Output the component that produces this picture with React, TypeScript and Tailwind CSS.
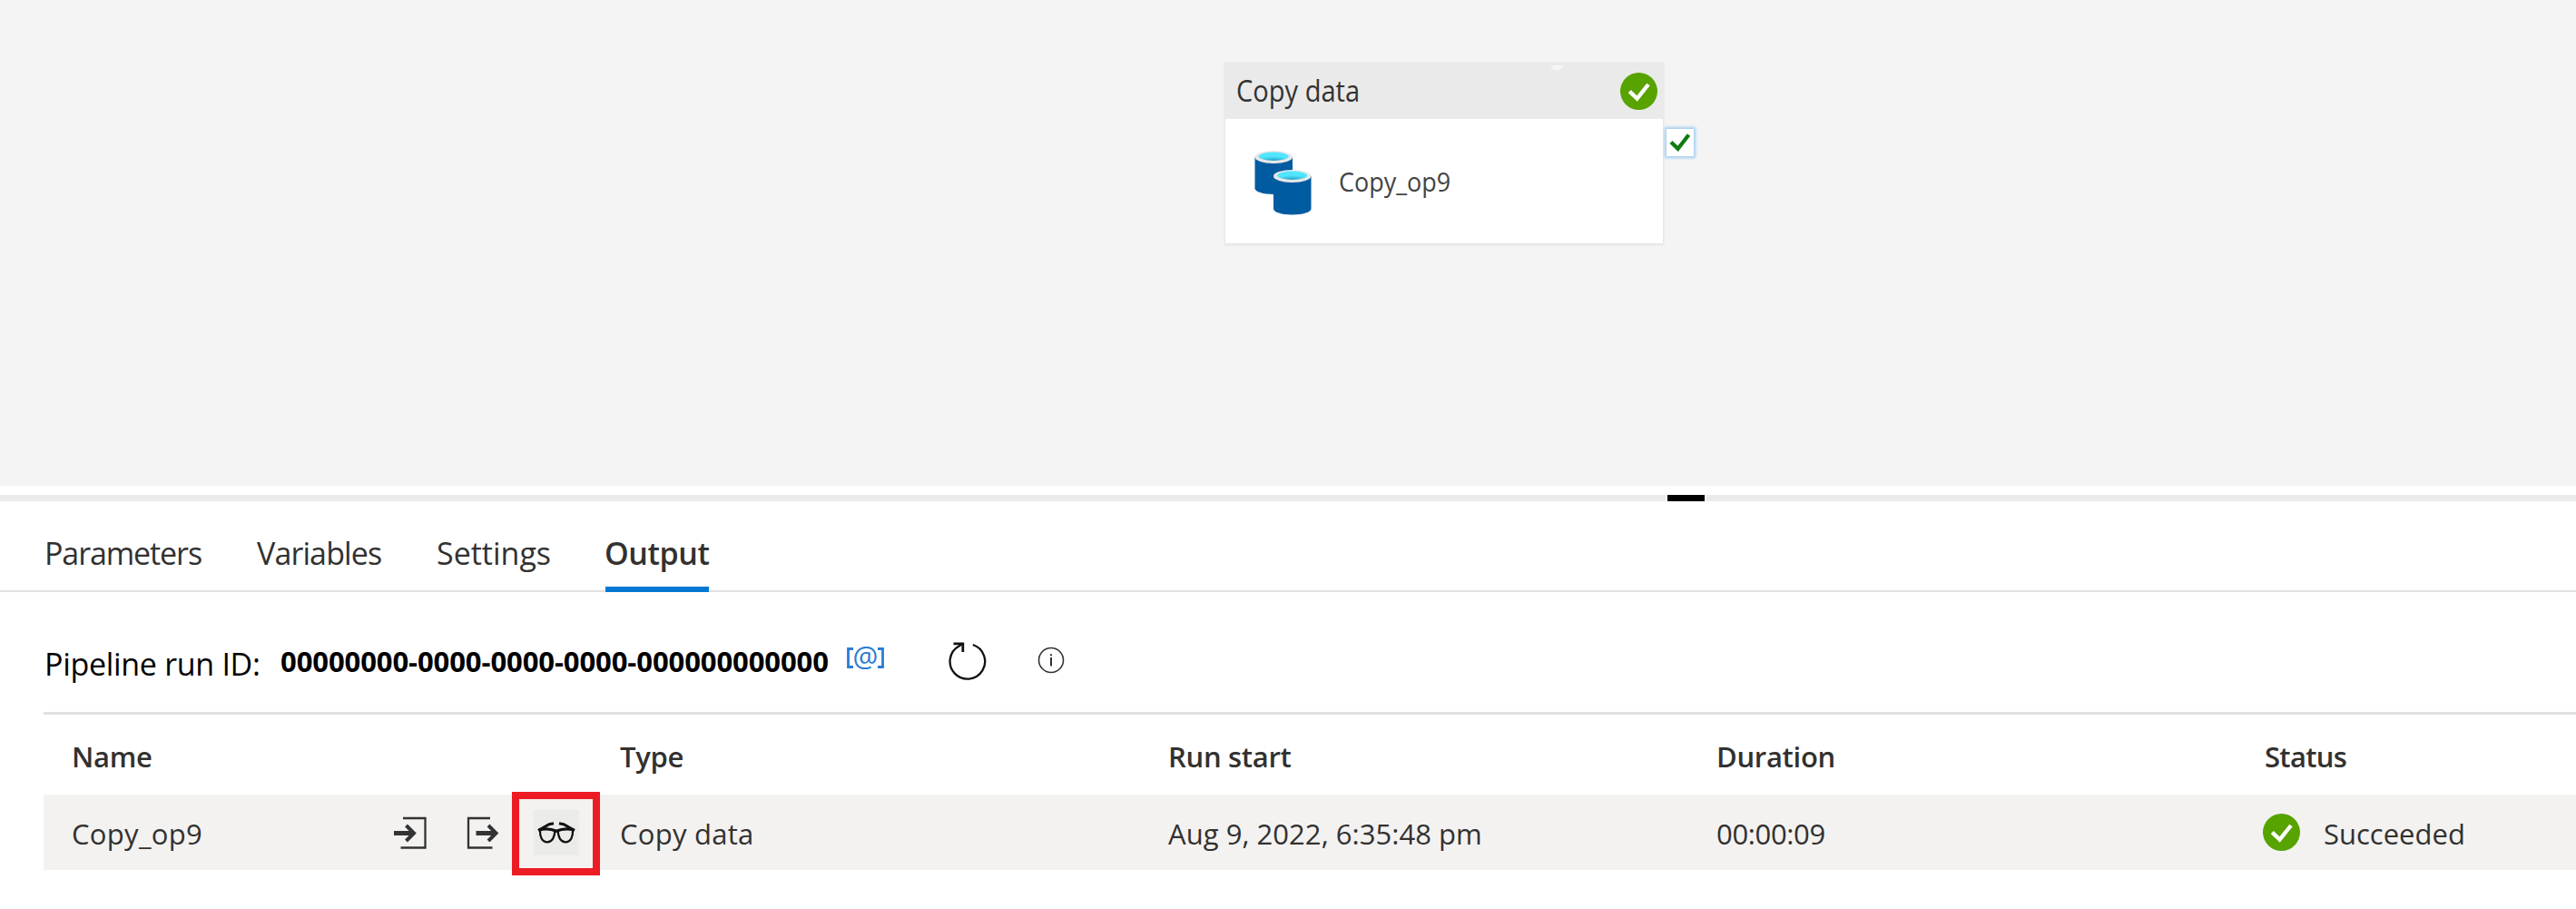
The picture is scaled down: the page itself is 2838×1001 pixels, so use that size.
import type { ReactNode } from "react";

function SuccessIcon({ className }: { className: string }) {
  return (
    <svg viewBox="0 0 41 41" className={className} fill="none">
      <circle cx="20.5" cy="20.5" r="20.5" fill="#57a300" />
      <path d="M10.3 20.6 18.6 28.6 31 13" stroke="#fff" strokeWidth="4.4" />
    </svg>
  );
}

function CopyDataIcon() {
  return (
    <svg viewBox="0 0 64 72" className="mt-[5px] h-[72px] w-16 shrink-0">
      <defs>
        <radialGradient id="well" cx="0.5" cy="1" r="0.6" gradientTransform="translate(0 0.1)">
          <stop offset="0" stopColor="#1f8fb8" />
          <stop offset="1" stopColor="#50e6ff" />
        </radialGradient>
      </defs>
      <path d="M0.5 7v34.5c0 3.600 9.300 6.500 20.700 6.500S42 45 42 41.500V7z" fill="#005ba1" />
      <ellipse cx="21.200" cy="7" rx="20.700" ry="7" fill="#e8e8e8" />
      <ellipse cx="21.200" cy="6.200" rx="16.500" ry="4.700" fill="url(#well)" />
      <path d="M21 28v36c0 3.600 9.300 6.500 20.700 6.500S62.500 67.600 62.500 64V28z" fill="#005ba1" />
      <ellipse cx="41.700" cy="28" rx="20.700" ry="7" fill="#e8e8e8" />
      <ellipse cx="41.700" cy="27.200" rx="16.500" ry="4.700" fill="url(#well)" />
    </svg>
  );
}

function InputIcon() {
  return (
    <svg viewBox="0 0 36 36" className="h-9 w-9 shrink-0" fill="none" stroke="#333">
      <path d="M10 2H34.500V34.500H7.500" strokeWidth="2.300" />
      <path d="M0 18.500H22" strokeWidth="5" />
      <path d="M13.500 10 22 18.500 13.500 27" strokeWidth="4" />
    </svg>
  );
}

function OutputIcon() {
  return (
    <svg viewBox="0 0 36 36" className="h-9 w-9 shrink-0" fill="none" stroke="#333">
      <path d="M26 2H2V34.500H28.500" strokeWidth="2.300" />
      <path d="M10.500 18.500H32.500" strokeWidth="5" />
      <path d="M24 10 32.500 18.500 24 27" strokeWidth="4" />
    </svg>
  );
}

function GlassesIcon() {
  return (
    <svg viewBox="0 0 42 24" className="h-6 w-[42px]" fill="none" stroke="#111" strokeWidth="2.300">
      <path d="M3 8.500C2.500 16 5 22.300 11 22.300S19 16 19.500 9" />
      <path d="M22.500 9C23 16 25 22.300 31 22.300S39.500 16 39 8.500" />
      <path d="M1 9.500 13 2.700 18 1.800M41 9.500 29 2.700 24 1.800" strokeWidth="3" />
      <path d="M1.500 9C7 7.500 15 7.500 21 10.300 27 7.500 35 7.500 40.500 9" strokeWidth="3.200" />
    </svg>
  );
}

function RefreshIcon() {
  return (
    <svg viewBox="0 0 42 42" className="h-[42px] w-[42px] shrink-0" fill="none" stroke="#111" strokeWidth="2.300">
      <path d="M26.800 3A19.300 19.300 0 1 1 11.500 4.500L15.500 1.800" />
      <path d="M5.500 1.800H15.800V11" strokeWidth="2.800" />
    </svg>
  );
}

function InfoIcon() {
  return (
    <svg viewBox="0 0 30 30" className="h-[30px] w-[30px] shrink-0" fill="none" stroke="#333">
      <circle cx="15" cy="15" r="13.500" strokeWidth="1.600" />
      <path d="M15 12V21.500M15 8.300V10.300" strokeWidth="2" />
    </svg>
  );
}

function Cell({ children }: { children: ReactNode }) {
  return <div className="flex w-[604px] shrink-0 items-center whitespace-nowrap">{children}</div>;
}

function ActivityCard() {
  return (
    <div className="relative ml-[1350px] mt-[69px] h-[199px] w-[482px] bg-white shadow-[0_1px_2px_1px_#e4e4e4]">
      <div className="flex h-[62px] items-center justify-between bg-[#eaeaea] pl-3 pr-[6px]">
        <span className="origin-left scale-x-[0.908] text-[32px] leading-none text-[#333]">Copy data</span>
        <SuccessIcon className="h-[41px] w-[41px]" />
      </div>
      <div className="flex h-[137px] items-center pl-8">
        <CopyDataIcon />
        <span className="ml-[29px] origin-left scale-x-[0.898] text-[30px] leading-none text-[#444]">Copy_op9</span>
      </div>
      <svg viewBox="0 0 14 5" className="absolute left-[358px] top-[3px] h-[5px] w-[14px]">
        <path d="M0 0H14L10 5H4Z" fill="#f6f6f6" />
      </svg>
      <div className="absolute left-[485.5px] top-[72.500px] flex h-[30px] w-[30px] items-center justify-center bg-white shadow-[0_0_3px_2px_#a3cdf0]">
        <svg viewBox="0 0 24 22" className="h-[22px] w-6" fill="none">
          <path d="M2 10.500 9.600 17.800 21.500 2.500" stroke="#107c10" strokeWidth="4.300" />
        </svg>
      </div>
    </div>
  );
}

function Tab({ children }: { children: ReactNode }) {
  return <span className="flex h-full items-center">{children}</span>;
}

export default function App() {
  return (
    <div className="flex h-[1001px] w-[2838px] flex-col overflow-hidden bg-white font-['Open_Sans','Noto_Sans',sans-serif] text-[31px] text-[#323130]">
      <div className="flex h-[535px] shrink-0 items-start bg-[#f4f4f4]">
        <ActivityCard />
      </div>

      <div className="mt-[10px] flex h-[7px] shrink-0 bg-[#ebebeb] pl-[1835px]">
        <div className="h-[7px] w-[45px] border-x-2 border-white bg-black" />
      </div>

      <div className="flex h-[100px] shrink-0 border-b-2 border-[#e1e1e1] pl-[49px] pt-4 text-[34px]">
        <div className="w-[234px] tracking-[-1.1px]"><Tab>Parameters</Tab></div>
        <div className="w-[198px] tracking-[-0.88px]"><Tab>Variables</Tab></div>
        <div className="w-[185px]"><Tab>Settings</Tab></div>
        <div className="relative w-[116px] font-semibold tracking-[-0.4px]">
          <Tab>Output</Tab>
          <div className="absolute -bottom-0.5 left-px h-[6px] w-[114px] bg-[#0078d4]" />
        </div>
      </div>

      <div className="flex h-[132px] shrink-0 items-center pl-[49px] pt-[26px] text-black">
        <span className="w-[260px] text-[34px] tracking-[-0.3px]">Pipeline run ID:</span>
        <span className="w-[623px] pb-[6px] font-bold tracking-[-0.09px]">
          00000000-0000-0000-0000-000000000000
        </span>
        <span className="flex w-[113px] items-center pb-[18px] text-[#2b7cd3]">
          <svg viewBox="0 0 8 23" className="mt-1 h-[23px] w-2 shrink-0" fill="none" stroke="currentColor" strokeWidth="2.800">
            <path d="M8 1.500H2.500V21.500H8" />
          </svg>
          <span className="flex w-[27px] shrink-0 justify-center text-[31px] font-medium leading-none">@</span>
          <svg viewBox="0 0 8 23" className="mt-1 h-[23px] w-2 shrink-0" fill="none" stroke="currentColor" strokeWidth="2.800">
            <path d="M0 1.500H5.500V21.500H0" />
          </svg>
        </span>
        <span className="w-[98px] pb-[6px]"><RefreshIcon /></span>
        <span className="pb-[9px]"><InfoIcon /></span>
      </div>

      <div className="ml-12 w-[2790px] shrink-0 border-t-[3px] border-[#e1e1e1]">
        <div className="flex h-[88px] items-center pl-[31px] pt-1 font-semibold tracking-[-0.3px]">
          <Cell>Name</Cell>
          <Cell>Type</Cell>
          <Cell>Run start</Cell>
          <Cell>Duration</Cell>
          <Cell><span className="tracking-[-0.7px]">Status</span></Cell>
        </div>
        <div className="relative flex h-[83px] items-center bg-[#f3f2f1] pl-[31px]">
          <Cell>
            <span className="w-[355px] pt-[3px] tracking-[0.31px]">Copy_op9</span>
            <InputIcon />
            <span className="ml-11"><OutputIcon /></span>
            <span className="ml-[38px] flex h-[50px] w-[50px] items-center justify-center bg-[#ebebea]">
              <GlassesIcon />
            </span>
          </Cell>
          <Cell><span className="pt-[3px] tracking-[0.25px]">Copy data</span></Cell>
          <Cell><span className="pt-[3px] tracking-[0.04px]">Aug 9, 2022, 6:35:48 pm</span></Cell>
          <Cell><span className="pt-[3px] tracking-[-0.35px]">00:00:09</span></Cell>
          <Cell>
            <SuccessIcon className="-ml-[2px] h-[41px] w-[41px]" />
            <span className="ml-[26px] pt-[3px]">Succeeded</span>
          </Cell>
          <div className="absolute left-[516px] top-[-3px] h-[92px] w-[97px] border-8 border-[#ed1c24]" />
        </div>
      </div>
    </div>
  );
}
